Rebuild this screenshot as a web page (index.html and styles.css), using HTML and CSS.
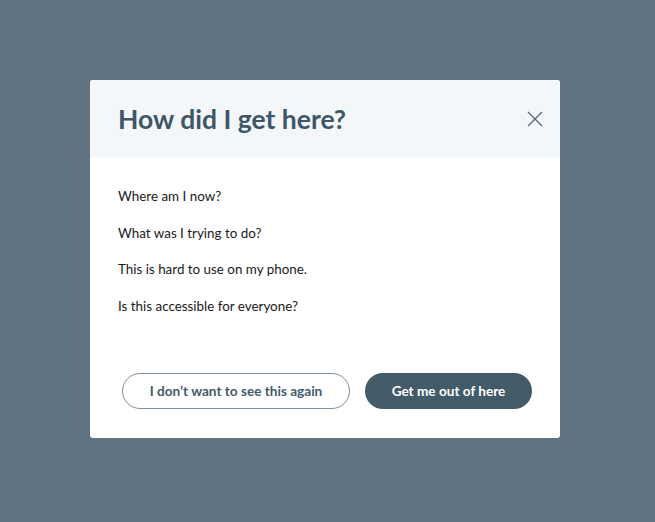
FILE: index.html
```html
<!DOCTYPE html>
<html>
<head>
<meta charset="utf-8">
<link rel="stylesheet" href="styles.css">
</head>
<body>
<div class="overlay">
  <div class="dialog">
    <div class="dialog-header">
      <h1 class="title">How did I get here?</h1>
      <button class="close" aria-label="Close">
        <svg width="16" height="16" viewBox="0 0 16 16"><path d="M1 1L15 15M15 1L1 15" stroke="#52687a" stroke-width="1.3" fill="none"/></svg>
      </button>
    </div>
    <div class="dialog-body">
      <p class="line">Where am I now?</p>
      <p class="line">What was I trying to do?</p>
      <p class="line">This is hard to use on my phone.</p>
      <p class="line">Is this accessible for everyone?</p>
    </div>
    <div class="dialog-footer">
      <button class="btn btn-outline">I don’t want to see this again</button>
      <button class="btn btn-solid">Get me out of here</button>
    </div>
  </div>
</div>
</body>
</html>
```
FILE: styles.css
```css
html, body {
  margin: 0;
  padding: 0;
  height: 100%;
}
body {
  background: #5f7383;
  font-family: "Lato", "Liberation Sans", sans-serif;
}
.overlay {
  height: 100%;
  display: flex;
  align-items: flex-start;
  justify-content: center;
  padding: 80px 5px 0 0;
  box-sizing: border-box;
}
.dialog {
  width: 470px;
  height: 358px;
  background: #ffffff;
  border-radius: 3px;
  overflow: hidden;
  display: flex;
  flex-direction: column;
}
.dialog-header {
  background: #f3f7fa;
  height: 77px;
  display: flex;
  align-items: center;
  justify-content: space-between;
  padding: 0 17px 0 28px;
}
.title {
  margin: 0;
  font-size: 26.5px;
  font-weight: 700;
  color: #3f5667;
}
.close {
  background: none;
  border: 0;
  padding: 0;
  width: 16px;
  height: 16px;
  display: flex;
}
.dialog-body {
  padding: 30px 28px 0 28px;
  flex: 1;
}
.line {
  margin: 0 0 18px 0;
  font-size: 13.4px;
  line-height: 18.5px;
  color: #1a1a1a;
}
.dialog-footer {
  display: flex;
  gap: 15px;
  padding: 0 28px 29px 32px;
}
.btn {
  height: 36px;
  border-radius: 18px;
  font-family: inherit;
  font-size: 13.6px;
  font-weight: 700;
  cursor: pointer;
  padding: 0;
}
.btn-outline {
  width: 228px;
  background: #fff;
  border: 1px solid #7d8e9b;
  color: #435a6b;
}
.btn-solid {
  width: 167px;
  background: #435a69;
  border: 0;
  color: #ffffff;
}
```
